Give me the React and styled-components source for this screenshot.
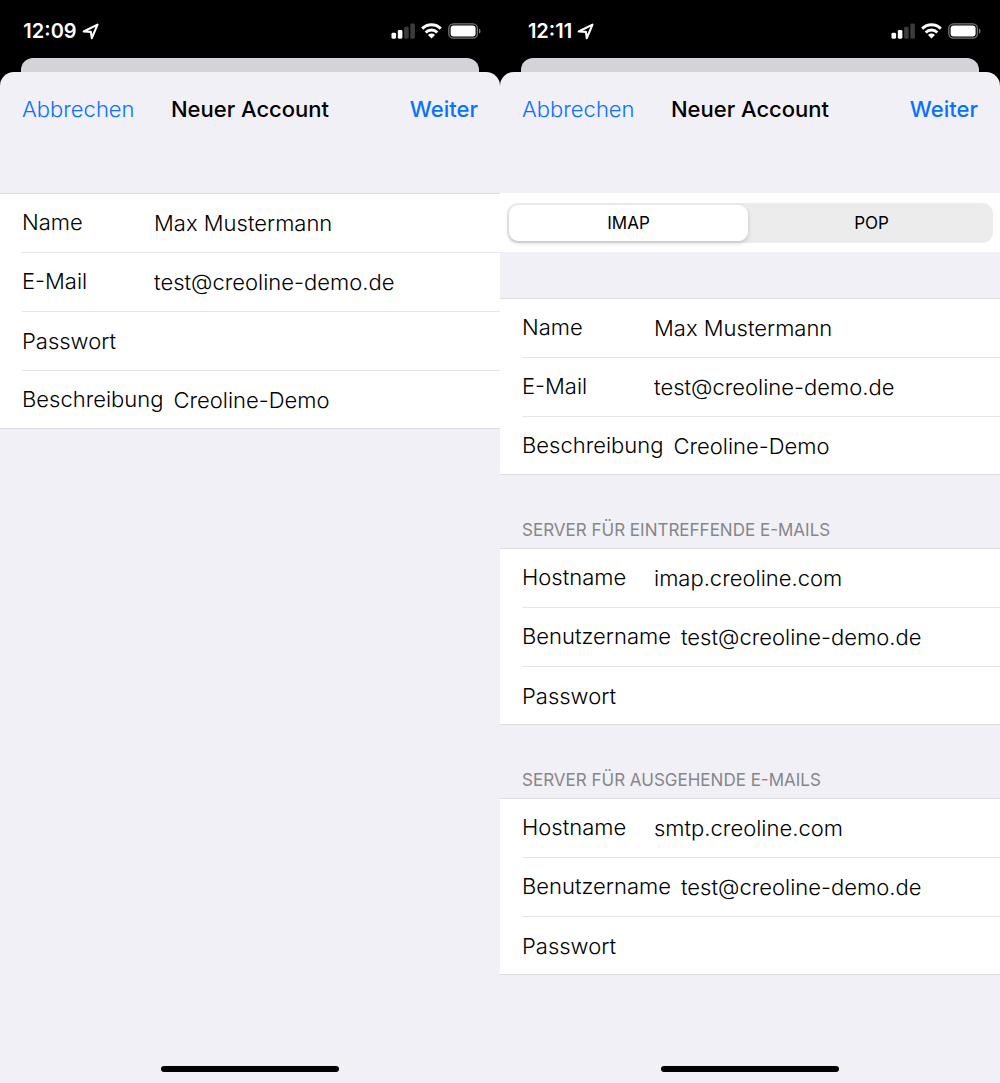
import React, { useId, useState } from "react";
import styled, { createGlobalStyle } from "styled-components";

const colors = {
  background: "#f1f0f6",
  backdrop: "#d4d3d8",
  blue: "#0a70ff",
  border: "#dddde1",
  separator: "#e6e6e8",
  grey: "#86868b",
  track: "#ececec",
};

const gutter = "22px";

const GlobalStyle = createGlobalStyle`
  * {
    box-sizing: border-box;
  }

  body {
    margin: 0;
    background: #000;
    color: #000;
    font-family: Inter, "Liberation Sans", sans-serif;
    font-size: 22px;
    font-weight: 300;
    line-height: 28px;
  }

  button,
  input {
    font: inherit;
    color: inherit;
  }
`;

const Screens = styled.main`
  display: grid;
  grid-template-columns: 1fr 1fr;
  min-height: 100vh;
`;

const Screen = styled.section`
  display: flex;
  flex-direction: column;
  min-width: 0;
`;

const StatusBar = styled.div`
  display: flex;
  align-items: center;
  justify-content: space-between;
  height: 58px;
  padding: 4px 19px 0 0;
  color: #fff;
`;

const Clock = styled.div`
  display: flex;
  align-items: center;
  justify-content: center;
  gap: 5px;
  width: 122px;
  font-size: 20px;
  font-weight: 600;
`;

const StatusIcons = styled.div`
  display: flex;
  align-items: center;
  gap: 6px;
`;

const Backdrop = styled.div`
  height: 14px;
  margin: 0 21px;
  border-radius: 12px 12px 0 0;
  background: ${colors.backdrop};
`;

const Sheet = styled.form`
  display: flex;
  flex: 1;
  flex-direction: column;
  border-radius: 14px 14px 0 0;
  background: ${colors.background};
`;

const NavBar = styled.header`
  display: grid;
  grid-template-columns: 1fr auto 1fr;
  align-items: center;
  height: 74px;
  margin-bottom: 47px;
  padding: 0 ${gutter};
`;

const Title = styled.h1`
  margin: 0;
  font-size: 22px;
  font-weight: 500;
`;

const NavButton = styled.button`
  justify-self: ${({ $primary }) => ($primary ? "end" : "start")};
  padding: 0;
  border: 0;
  background: none;
  color: ${colors.blue};
  font-weight: ${({ $primary }) => ($primary ? 500 : 300)};
  cursor: pointer;
`;

const SegmentBar = styled.div`
  margin-bottom: 46px;
  padding: 10px 7px 9px;
  background: #fff;
`;

const Segments = styled.div`
  display: grid;
  grid-template-columns: 1fr 1fr;
  gap: 4px;
  padding: 2px;
  border-radius: 11px;
  background: ${colors.track};
`;

const Segment = styled.label`
  position: relative;
  border-radius: 9px;
  font-size: 17px;
  font-weight: 400;
  line-height: 36px;
  text-align: center;
  cursor: pointer;

  &:has(input:checked) {
    background: #fff;
    box-shadow: 0 2px 4px rgba(0, 0, 0, 0.18);
  }

  input {
    position: absolute;
    inset: 0;
    margin: 0;
    opacity: 0;
  }
`;

const Group = styled.fieldset`
  min-width: 0;
  margin: 0;
  padding: 0;
  border: 0;
`;

const GroupTitle = styled.legend`
  padding: 44px ${gutter} 7px;
  color: ${colors.grey};
  font-size: 17px;
  font-weight: 400;
  line-height: 22px;
  text-transform: uppercase;
`;

const Rows = styled.div`
  border: solid ${colors.border};
  border-width: 1px 0;
  background: #fff;
`;

const Row = styled.div`
  display: flex;
  align-items: center;
  gap: 10px;
  height: 59px;
  margin-left: ${gutter};
  border-bottom: 1px solid ${colors.separator};

  &:last-child {
    height: 57px;
    border-bottom: 0;
  }
`;

const Label = styled.label`
  min-width: 122px;
  padding-bottom: ${({ $filled }) => ($filled ? "2px" : 0)};
`;

const Input = styled.input`
  flex: 1;
  min-width: 0;
  padding: 0;
  border: 0;
  outline: 0;
  background: none;
`;

const HomeIndicator = styled.div`
  width: 178px;
  height: 6px;
  margin: auto auto 11px;
  border-radius: 3px;
  background: #000;
`;

const LocationIcon = () => (
  <svg width="17" height="17" viewBox="0 0 17 17" aria-hidden="true">
    <path
      d="M15.5 1.6 9.8 15.2 8.9 8.9 1.7 8.5Z"
      fill="none"
      stroke="currentColor"
      strokeWidth="2.1"
      strokeLinejoin="round"
    />
  </svg>
);

const SignalIcon = () => (
  <svg width="24" height="16" viewBox="0 0 24 16" aria-hidden="true">
    <g fill="currentColor">
      <rect x="0.5" y="9.8" width="4.6" height="5.9" rx="1.4" />
      <rect x="6.8" y="7" width="4.6" height="8.7" rx="1.4" />
      <rect x="13.1" y="3.8" width="4.6" height="11.9" rx="1.4" opacity="0.23" />
      <rect x="19.3" y="0.6" width="4.6" height="15.1" rx="1.4" opacity="0.23" />
    </g>
  </svg>
);

const WifiIcon = () => (
  <svg width="21" height="16" viewBox="0 0 21 16" aria-hidden="true">
    <g fill="none" stroke="currentColor" strokeWidth="2.9">
      <path d="M1.2 5.6a13.2 13.2 0 0 1 18.6 0" />
      <path d="M4.7 9.4a8.2 8.2 0 0 1 11.6 0" />
    </g>
    <path d="M10.5 15.6 7 12a5 5 0 0 1 7 0Z" fill="currentColor" />
  </svg>
);

const BatteryIcon = () => (
  <svg width="33" height="16" viewBox="0 0 33 16" aria-hidden="true">
    <rect
      x="0.8"
      y="0.8"
      width="28.6"
      height="14.4"
      rx="4.6"
      fill="none"
      stroke="#77777a"
      strokeWidth="1.3"
    />
    <rect x="2.6" y="2.5" width="25" height="11" rx="3" fill="currentColor" />
    <path d="M31 5.4c2 .8 2 4.4 0 5.2Z" fill="#77777a" />
  </svg>
);

const Field = ({ label, value = "", type = "text" }) => {
  const id = useId();

  return (
    <Row>
      <Label htmlFor={id} $filled={Boolean(value)}>
        {label}
      </Label>
      <Input id={id} type={type} defaultValue={value} />
    </Row>
  );
};

const FieldGroup = ({ title, fields }) => (
  <Group>
    {title && <GroupTitle>{title}</GroupTitle>}
    <Rows>
      {fields.map((field) => (
        <Field key={field.label} {...field} />
      ))}
    </Rows>
  </Group>
);

const AccountScreen = ({ time, children }) => (
  <Screen>
    <StatusBar>
      <Clock>
        <span>{time}</span>
        <LocationIcon />
      </Clock>
      <StatusIcons>
        <SignalIcon />
        <WifiIcon />
        <BatteryIcon />
      </StatusIcons>
    </StatusBar>
    <Backdrop />
    <Sheet onSubmit={(event) => event.preventDefault()}>
      <NavBar>
        <NavButton type="button">Abbrechen</NavButton>
        <Title>Neuer Account</Title>
        <NavButton type="submit" $primary>
          Weiter
        </NavButton>
      </NavBar>
      {children}
      <HomeIndicator />
    </Sheet>
  </Screen>
);

const email = "test@creoline-demo.de";

const nameField = { label: "Name", value: "Max Mustermann" };
const emailField = { label: "E-Mail", value: email, type: "email" };
const passwordField = { label: "Passwort", type: "password" };
const descriptionField = { label: "Beschreibung", value: "Creoline-Demo" };
const userField = { label: "Benutzername", value: email };

const protocols = ["IMAP", "POP"];

export default function App() {
  const [protocol, setProtocol] = useState("IMAP");

  return (
    <>
      <GlobalStyle />
      <Screens>
        <AccountScreen time="12:09">
          <FieldGroup
            fields={[nameField, emailField, passwordField, descriptionField]}
          />
        </AccountScreen>
        <AccountScreen time="12:11">
          <SegmentBar>
            <Segments>
              {protocols.map((name) => (
                <Segment key={name}>
                  <input
                    type="radio"
                    name="protocol"
                    checked={protocol === name}
                    onChange={() => setProtocol(name)}
                  />
                  {name}
                </Segment>
              ))}
            </Segments>
          </SegmentBar>
          <FieldGroup fields={[nameField, emailField, descriptionField]} />
          <FieldGroup
            title="Server für eintreffende E-Mails"
            fields={[
              { label: "Hostname", value: "imap.creoline.com" },
              userField,
              passwordField,
            ]}
          />
          <FieldGroup
            title="Server für ausgehende E-Mails"
            fields={[
              { label: "Hostname", value: "smtp.creoline.com" },
              userField,
              passwordField,
            ]}
          />
        </AccountScreen>
      </Screens>
    </>
  );
}
